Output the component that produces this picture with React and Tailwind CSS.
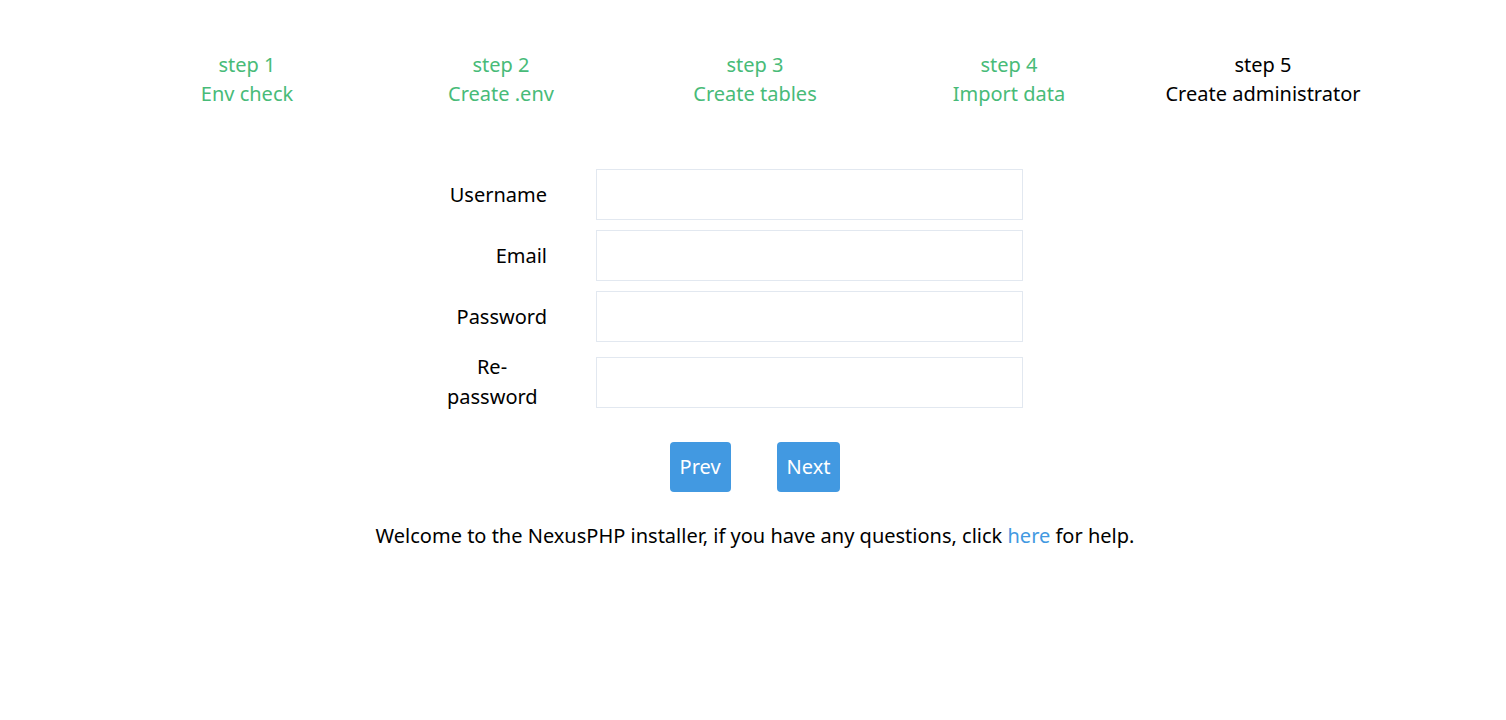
import React from 'react';

const steps = [
    { no: 'step 1', name: 'Env check', done: true },
    { no: 'step 2', name: 'Create .env', done: true },
    { no: 'step 3', name: 'Create tables', done: true },
    { no: 'step 4', name: 'Import data', done: true },
    { no: 'step 5', name: 'Create administrator', done: false },
];

const fields = [
    { label: 'Username', type: 'text' },
    { label: 'Email', type: 'email' },
    { label: 'Password', type: 'password' },
];

const App = () => {
    return (
        <div className="min-h-screen bg-white text-black text-[20px] leading-[30px]" style={{ fontFamily: '"Noto Sans", "Open Sans", sans-serif' }}>
            <div className="w-[1270px] ml-[120px] pt-[50px]">
                {/* Steps */}
                <div className="grid grid-cols-5 leading-[29px]">
                    {steps.map((s) => (
                        <div key={s.no} className={`text-center ${s.done ? 'text-[#48bb78]' : 'text-black'}`}>
                            <div>{s.no}</div>
                            <div>{s.name}</div>
                        </div>
                    ))}
                </div>

                {/* Form */}
                <form className="w-[616px] mx-auto mt-[61px] flex flex-col gap-[10px]">
                    {fields.map((f) => (
                        <div key={f.label} className="flex items-center">
                            <label className="w-[100px] text-right">{f.label}</label>
                            <input type={f.type} className="ml-[49px] w-[427px] h-[51px] border border-[#e2e8f0] outline-none px-3" />
                        </div>
                    ))}
                    <div className="flex items-center">
                        <label className="w-[100px] pr-[10px] text-center">Re-password</label>
                        <input type="password" className="ml-[49px] w-[427px] h-[51px] border border-[#e2e8f0] outline-none px-3" />
                    </div>
                </form>

                {/* Buttons */}
                <div className="flex justify-center gap-[46px] mt-[30px]">
                    <button type="button" className="bg-[#4299e1] text-white rounded px-[10px] h-[50px]">Prev</button>
                    <button type="button" className="bg-[#4299e1] text-white rounded px-[10px] h-[50px]">Next</button>
                </div>

                <p className="text-center mt-[29px]">
                    Welcome to the NexusPHP installer, if you have any questions, click <a href="#" className="text-[#4299e1]">here</a> for help.
                </p>
            </div>
        </div>
    );
};

export default App;
